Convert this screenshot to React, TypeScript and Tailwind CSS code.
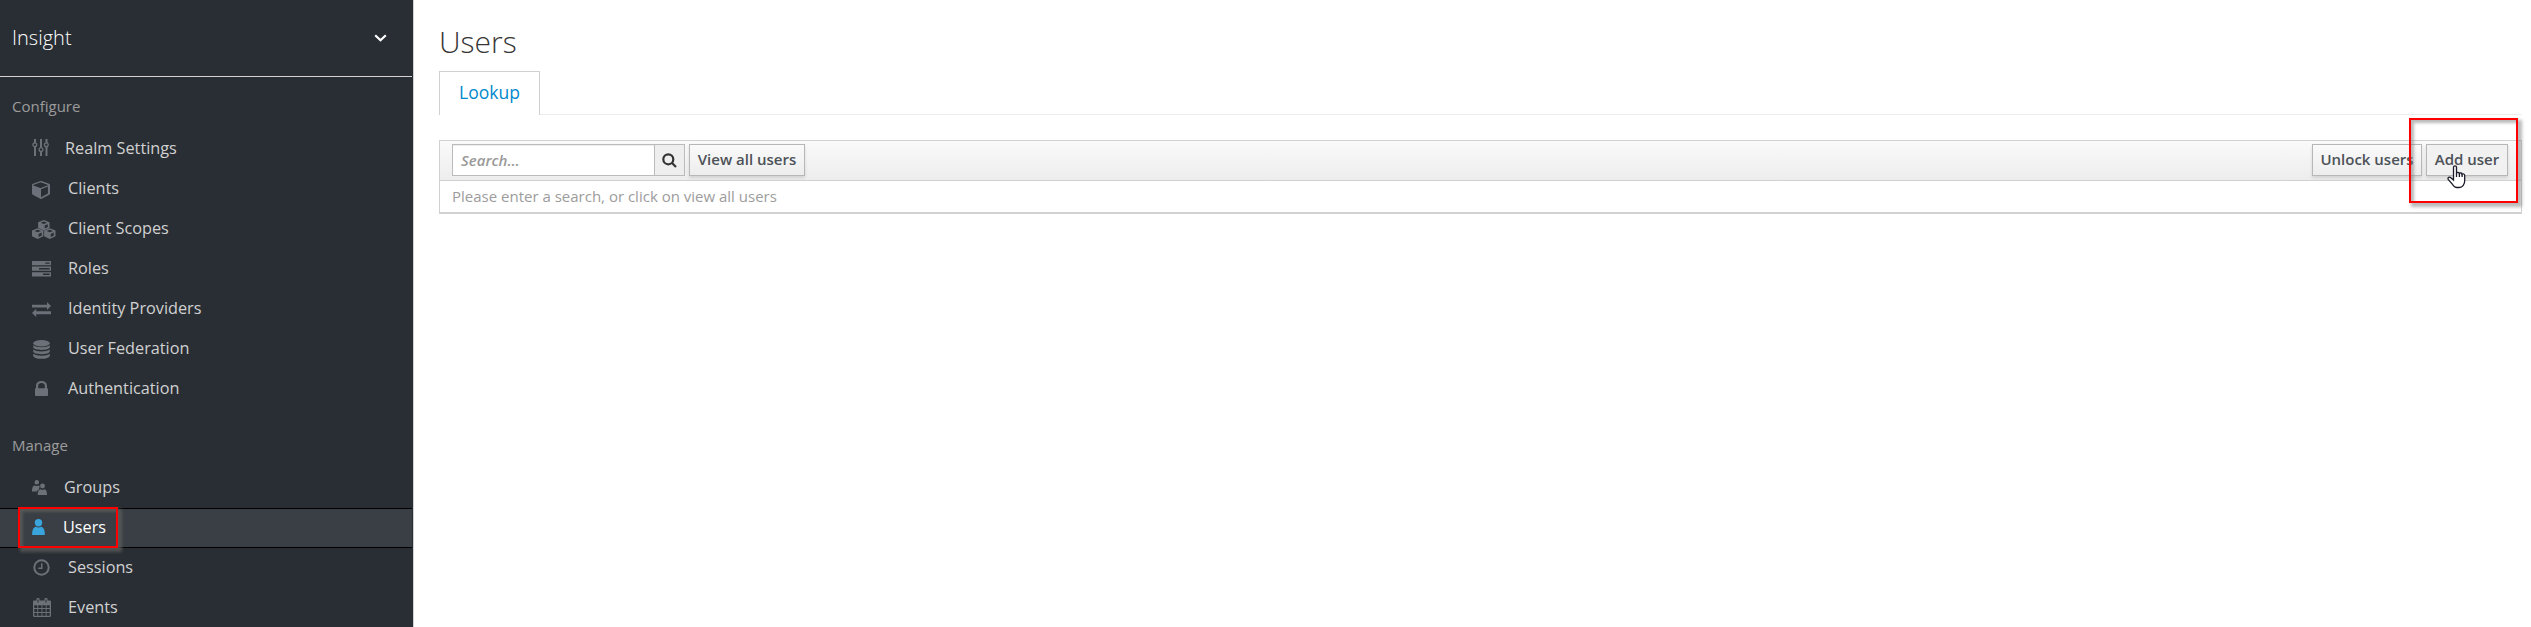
import type { ReactNode } from "react";

const ICON = "block fill-current";

function Sliders() {
  return (
    <svg className={ICON} width="17" height="17" viewBox="0 0 17 17">
      <path d="M2 0h2v4.2H2zM2 8h2v9H2zM8 0h2v8.4H8zM8 13h2v4H8zM13.500 0h2v4.200h-2zM13.500 8h2v9h-2z" />
      <g fill="none" stroke="currentColor" strokeWidth="1.300">
        <circle cx="2.800" cy="5.800" r="1.900" />
        <circle cx="9" cy="10.500" r="1.900" />
        <circle cx="14.300" cy="5.800" r="1.900" />
      </g>
    </svg>
  );
}

function Cube() {
  return (
    <svg className={ICON} width="18" height="18" viewBox="0 0 1664 1664">
      <path d="M832 1504l640-349V519L832 752zM768 639l698-254L768 131 70 385zM1664 384v768q0 35-18 65t-49 47l-704 384q-28 16-61 16t-61-16L67 1264q-31-17-49-47t-18-65V384q0-40 23-73t61-47L788 8q22-8 44-8t44 8l704 256q38 14 61 47t23 73z" />
      <path fill="#292e34" d="M832 130l640 240-640 230-640-230z" />
    </svg>
  );
}

function CubeShape({ x, y }: { x: number; y: number }) {
  return (
    <g transform={`translate(${x} ${y})`}>
      <path
        fillRule="evenodd"
        d="M5.500 0L11.200 2.200v5.800L5.500 10.600 -.2 8V2.200zM5.500 1.400L2.300 2.700l3.200 1.300 3.200-1.300zM6.400 5.600v3L9.500 7.100V4.300z"
      />
    </g>
  );
}

function Cubes() {
  return (
    <svg className={ICON} width="24" height="19" viewBox="0 0 24 19">
      <CubeShape x={6.3} y={0} />
      <CubeShape x={0.2} y={8.3} />
      <CubeShape x={12.300} y={8.3} />
    </svg>
  );
}

function Tasks() {
  return (
    <svg className={ICON} width="19" height="16" viewBox="0 0 19 16">
      <path
        fillRule="evenodd"
        d="M0 0h19v4.200H0zM13.300 1.400v1.400h4.300V1.400zM0 5.600h19v4.200H0zM7 7v1.400h10.600V7zM0 11.200h19v4.200H0zM11 12.600V14h6.600v-1.400z"
      />
    </svg>
  );
}

function Exchange() {
  return (
    <svg className={ICON} width="19" height="15" viewBox="0 0 19 15">
      <path d="M0 2.800h15V0l4 4.100-4 4V5.600H0zM19 9.300H4.200V6.700L0 10.900 4.200 15v-2.800H19z" />
    </svg>
  );
}

function Database() {
  return (
    <svg className={ICON} width="17" height="19" viewBox="0 0 17 19">
      <ellipse cx="8.500" cy="3.200" rx="8.300" ry="3.200" />
      <path d="M.2 5.300c3 2.600 13.600 2.600 16.600 0v1.800c0 3.800-16.600 3.800-16.600 0zM.2 9.500c3 2.600 13.600 2.600 16.600 0v1.800c0 3.800-16.600 3.800-16.600 0zM.2 13.700c3 2.600 13.600 2.600 16.600 0v2c0 4.100-16.600 4.100-16.600 0z" />
    </svg>
  );
}

function Lock() {
  return (
    <svg className={ICON} width="13" height="15" viewBox="0 0 13 15">
      <path d="M1 7.200V4.800C1 2 3.400 0 6.500 0S12 2 12 4.800v2.400h.2c.5 0 .8.300.8.800v6.200c0 .5-.3.800-.8.800H.8c-.5 0-.8-.3-.8-.8V8c0-.5.3-.8.800-.8zM3.200 7.200h6.600V4.800c0-1.700-1.400-2.700-3.300-2.700S3.200 3.100 3.200 4.800z" />
    </svg>
  );
}

function Group() {
  return (
    <svg className={ICON} width="15" height="15" viewBox="0 0 15 15">
      <circle cx="4.800" cy="2.300" r="2.200" />
      <path d="M0 11.500C0 8 .6 5.400 3 5.400c1 .9 2.600.9 3.600 0 .7.200 1 .5 1.300 1C6.800 7.500 7 9 7.300 9.400 5.900 9.700 5 10.500 4.800 11.500z" />
      <circle cx="10.500" cy="6" r="2.400" />
      <path d="M5.700 15c0-3.300.8-5.600 3-5.800 1 1 2.600 1 3.600 0 2.200.2 2.700 2.500 2.700 5.800z" />
    </svg>
  );
}

function User() {
  return (
    <svg className={ICON} width="13" height="16" viewBox="0 0 13 16">
      <circle cx="6.500" cy="3.800" r="3.700" />
      <path d="M.2 16C0 11.500 1 8.400 4 7.700c1.500 1.100 3.500 1.100 5 0 3 .7 4 3.800 3.800 8.300z" />
    </svg>
  );
}

function Clock() {
  return (
    <svg className={ICON} width="17" height="17" viewBox="0 0 17 17">
      <circle cx="8.500" cy="8.500" r="7.200" fill="none" stroke="currentColor" strokeWidth="2" />
      <path d="M8 4.200h1.500v5.700H5.300V8.500H8z" />
    </svg>
  );
}

function Calendar() {
  return (
    <svg className={ICON} width="18" height="19" viewBox="0 0 18 19">
      <path
        fillRule="evenodd"
        d="M1.200 2.600h2.200V1.500a1.600 1.600 0 0 1 3.200 0v1.100h4.800V1.500a1.600 1.600 0 0 1 3.200 0v1.100h2.200c.7 0 1.200.5 1.200 1.200V17.800c0 .7-.5 1.200-1.200 1.200H1.200C.5 19 0 18.500 0 17.800V3.800c0-.7.5-1.200 1.200-1.200zM1.300 7.200v2.900h3V7.200zM5.200 7.200v2.900h3.300V7.200zM9.400 7.200v2.900h3.300V7.200zM13.600 7.200v2.900h3.100V7.200zM1.300 11v3.100h3V11zM5.200 11v3.100h3.300V11zM9.400 11v3.100h3.300V11zM13.600 11v3.100h3.100V11zM1.300 15v2.700h3V15zM5.200 15v2.700h3.300V15zM9.400 15v2.700h3.300V15zM13.600 15v2.700h3.100V15zM4.500 1.500v3h1v-3zM12.500 1.500v3h1v-3z"
      />
    </svg>
  );
}

type Item = { label: string; icon: ReactNode; iconBox: string };

const configure: Item[] = [
  { label: "Realm Settings", icon: <Sliders />, iconBox: "w-[33px] pb-px" },
  { label: "Clients", icon: <Cube />, iconBox: "w-9 pt-[3px]" },
  { label: "Client Scopes", icon: <Cubes />, iconBox: "w-9 pt-[3px]" },
  { label: "Roles", icon: <Tasks />, iconBox: "w-9 pt-[2px]" },
  { label: "Identity Providers", icon: <Exchange />, iconBox: "w-9 pt-[3px]" },
  { label: "User Federation", icon: <Database />, iconBox: "w-9 pt-[3px] pl-px" },
  { label: "Authentication", icon: <Lock />, iconBox: "w-9 pt-px pl-[3px]" },
];

const manage: Item[] = [
  { label: "Groups", icon: <Group />, iconBox: "w-8 pb-px" },
  { label: "Users", icon: <User />, iconBox: "w-[31px] pb-[2px]" },
  { label: "Sessions", icon: <Clock />, iconBox: "w-9 pb-px pl-px" },
  { label: "Events", icon: <Calendar />, iconBox: "w-9 pb-px pl-px" },
];

function NavList({ items, active, raised }: { items: Item[]; active?: string; raised?: boolean }) {
  return (
    <ul>
      {items.map((item) => {
        const on = item.label === active;
        return (
          <li
            key={item.label}
            className={
              on
                ? "relative mr-px flex h-10 items-center border-y border-black bg-[#393f45] pl-8 text-white"
                : "flex h-10 items-center pl-8 text-[#d1d1d1]"
            }
          >
            {on && (
              <span className="absolute -top-[2px] left-[18px] h-[41px] w-[100px] border-2 border-[#fe0000] shadow-[3px_3px_3px_1px_rgba(95,95,92,0.75),inset_3px_3px_3px_rgba(95,95,92,0.75)]" />
            )}
            <span className={`relative flex shrink-0 ${item.iconBox} ${on ? "text-[#39a5dc]" : "text-[#6c7179]"}`}>
              {item.icon}
            </span>
            <span className={`relative text-[16.25px] leading-none ${raised ? "pb-[2px]" : ""}`}>{item.label}</span>
          </li>
        );
      })}
    </ul>
  );
}

const BUTTON =
  "flex h-8 items-center justify-center border border-[#b7b7b7] pb-[2px] text-[15px] font-semibold text-[#4d5258] shadow-[0_2px_3px_rgba(3,3,3,0.12)]";

export default function App() {
  return (
    <div className="flex h-[627px] w-[2531px] overflow-hidden bg-white font-['Open_Sans',sans-serif]">
      <aside className="h-full w-[414px] shrink-0 border-r border-[#d1d1d1] bg-[#292e34]">
        <div className="mr-px flex h-[77px] items-center justify-between border-b border-[#d1d1d1] pr-[25px] pl-3 text-white">
          <span className="text-xl leading-none font-light">Insight</span>
          <svg width="13" height="8" viewBox="0 0 13 8" fill="none" stroke="currentColor" strokeWidth="2.200">
            <path d="M1.200 1.200l5.300 5 5.300-5" />
          </svg>
        </div>
        <div className="flex h-[51px] items-end pb-[12px] pl-3 text-[15px] text-[#9c9c9c]">
          <h2 className="leading-5">Configure</h2>
        </div>
        <NavList items={configure} />
        <div className="flex h-[60px] items-end pb-[13px] pl-3 text-[15px] text-[#9c9c9c]">
          <h2 className="leading-5">Manage</h2>
        </div>
        <NavList items={manage} active="Users" raised />
      </aside>

      <main className="flex-1 pr-[9px] pl-[25px]">
        <h1 className="h-[71px] pt-[22px] text-[30px] leading-10 font-light text-[#363636]">Users</h1>
        <div className="flex h-11">
          <a className="flex w-[101px] items-center justify-center border border-b-0 border-[#d1d1d1] pb-[2px] text-[17.500px] text-[#0088ce]">
            Lookup
          </a>
          <div className="flex-1 border-b border-[#ededed]" />
        </div>

        <section className="mt-[25px] border border-b-2 border-[#d1d1d1]">
          <div className="flex h-10 items-start border-b border-[#d1d1d1] bg-linear-to-b from-[#fafafa] to-[#ededed] pt-[3px] pr-[13px] pl-3">
            <div className="flex h-8 w-[203px] items-center border border-[#bbb] bg-white pl-2 text-[15px] font-semibold text-[#999] italic shadow-[inset_0_1px_1px_rgba(3,3,3,0.075)]">
              Search...
            </div>
            <div className="flex h-8 w-[30px] items-center justify-center border border-l-0 border-[#bbb] bg-[#eee] text-[#333]">
              <svg width="15" height="15" viewBox="0 0 15 15" fill="none" stroke="currentColor" strokeWidth="2.200">
                <circle cx="6.300" cy="6.300" r="5" />
                <path d="M10 10l4 4" />
              </svg>
            </div>
            <button className={`${BUTTON} ml-1 w-[116px] bg-linear-to-b from-[#fafafa] to-[#ededed]`}>
              View all users
            </button>
            <div className="flex-1" />
            <button className={`${BUTTON} w-[110px] bg-linear-to-b from-[#fafafa] to-[#ededed]`}>Unlock users</button>
            <div className="relative ml-1">
              <button className={`${BUTTON} w-[82px] bg-[#f1f1f1]`}>Add user</button>
              <span className="absolute -top-[26px] -left-[17px] h-[85px] w-[109px] border-2 border-[#fe0000] shadow-[3px_3px_3px_1px_rgba(120,120,120,0.5),inset_3px_3px_3px_rgba(120,120,120,0.5)]" />
              <svg className="absolute top-[21px] left-[21px]" width="19" height="24" viewBox="0 0 19 24">
                <path
                  d="M6.500 15V2.300c0-2 3-2 3 0v6c.3-1.300 2.700-1.200 2.900.3.500-1 2.500-.8 2.700.7.800-.8 2.600-.4 2.600 1.200v5.300c0 3.200-2 6.700-5.500 6.700H10c-2 0-3.300-1-4.300-2.800L1.200 14.300c-.8-1.700 1.300-2.800 2.600-1.600z"
                  fill="white"
                  stroke="#1a1a2a"
                  strokeWidth="1.300"
                />
                <path d="M9.500 8v4M12.400 8.600V12M15.100 9.300V12" stroke="#1a1a2a" strokeWidth="1.300" />
              </svg>
            </div>
          </div>
          <div className="flex h-[31px] items-center pl-3 text-[15px] text-[#9c9c9c]">
            Please enter a search, or click on view all users
          </div>
        </section>
      </main>
    </div>
  );
}
